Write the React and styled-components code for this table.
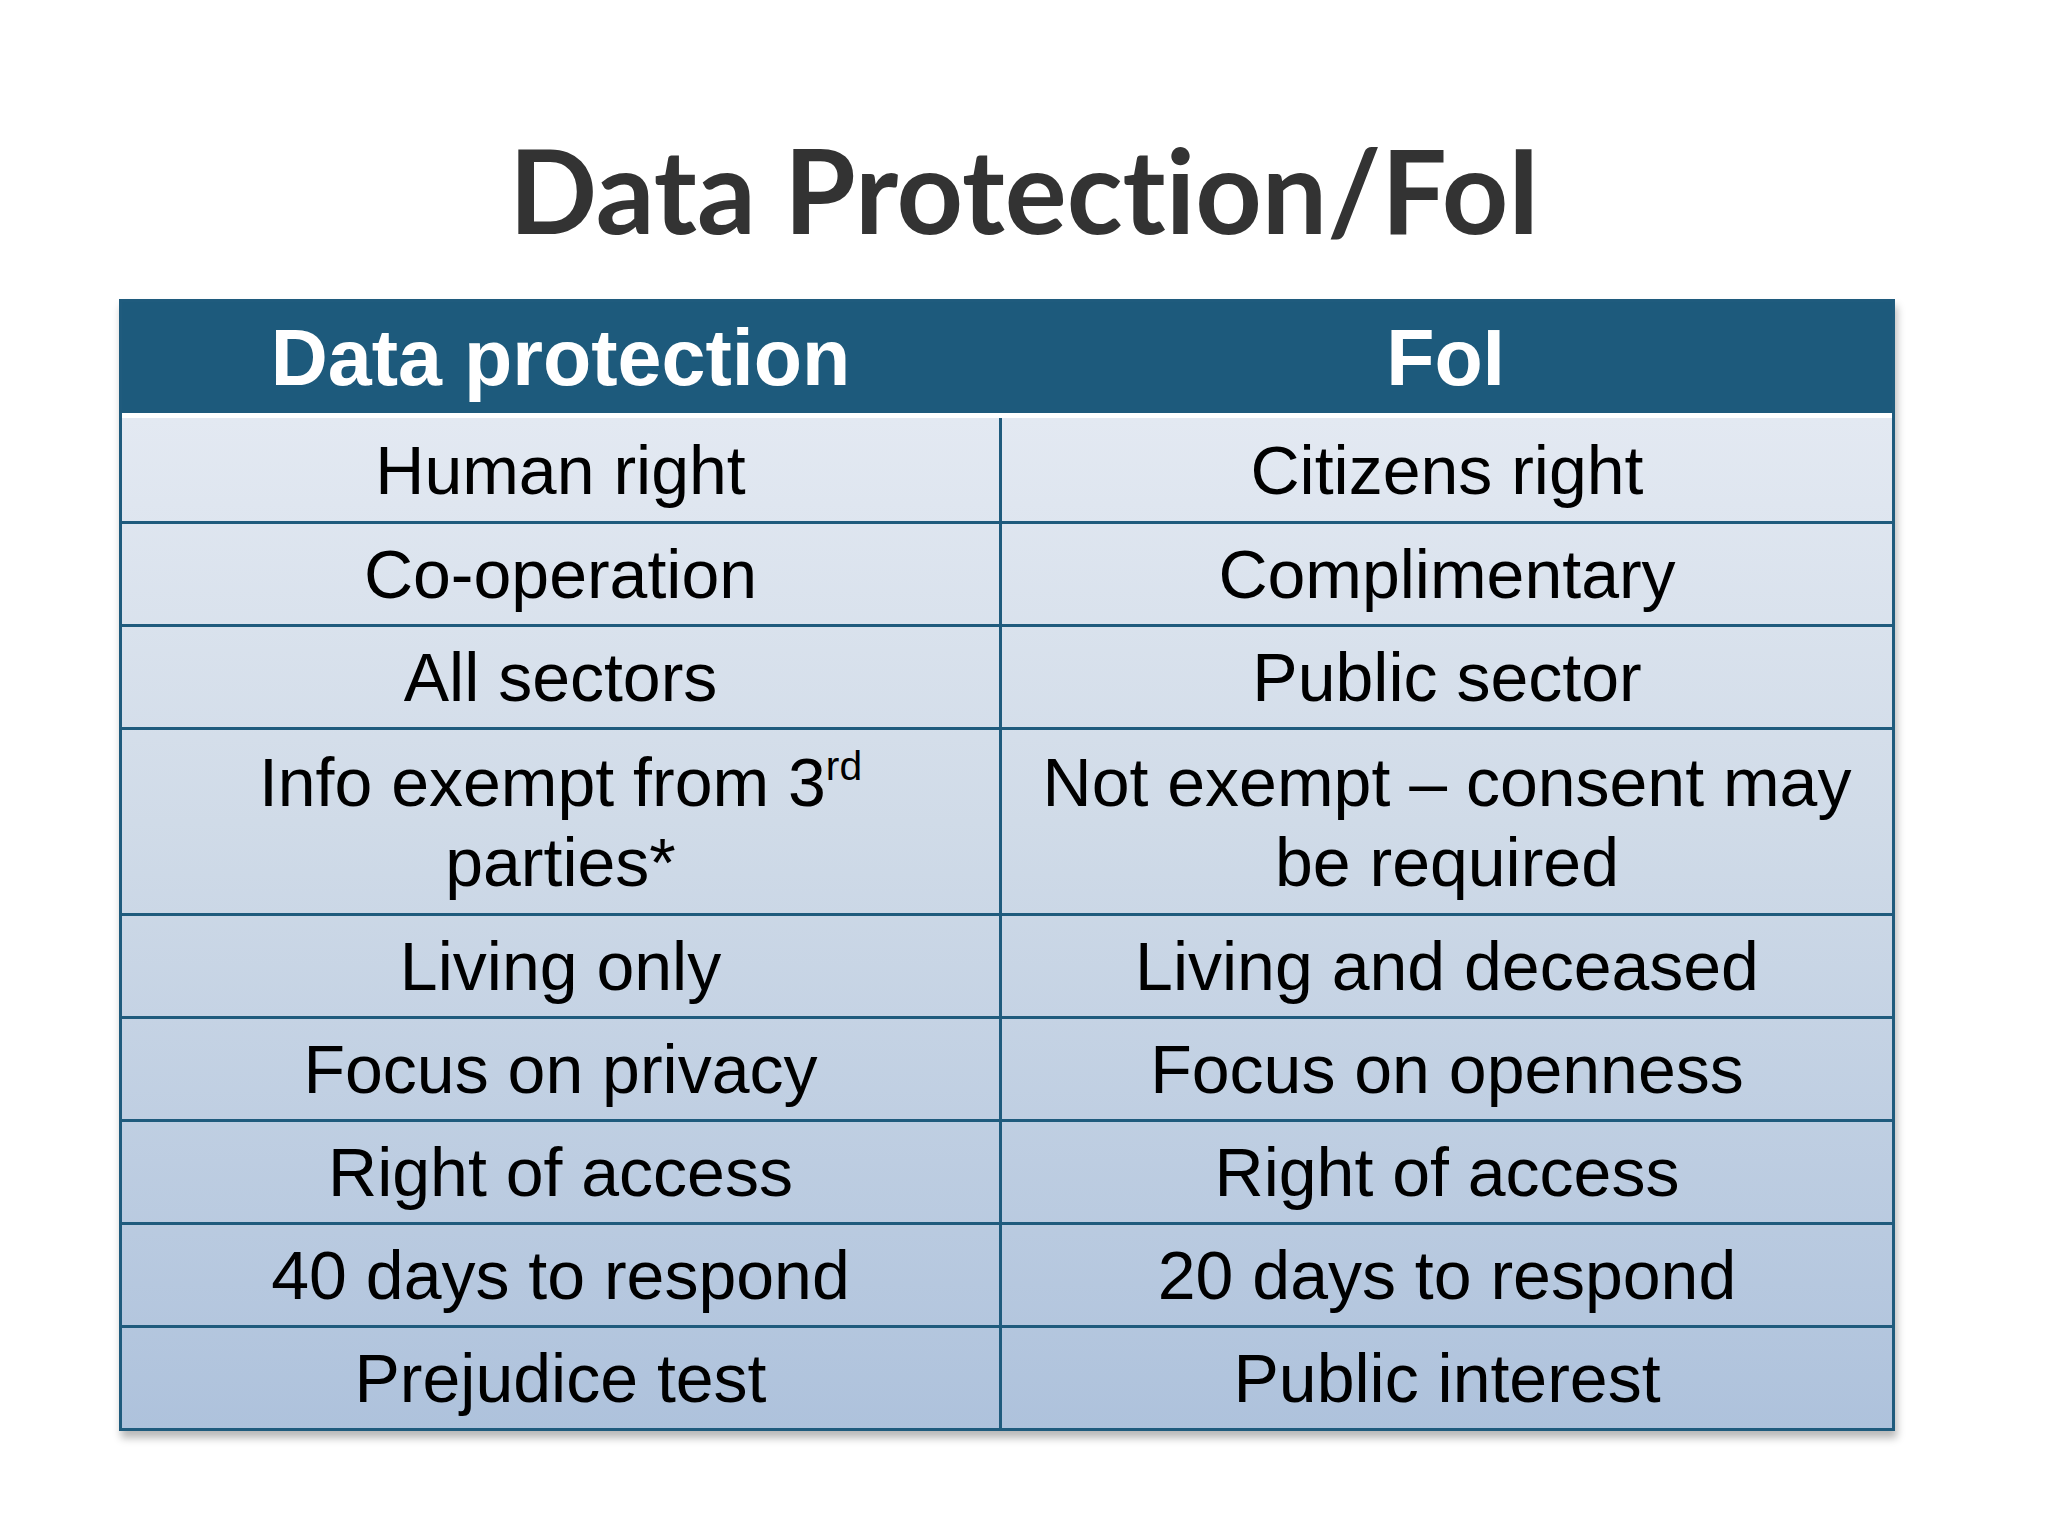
import React from 'react';
import styled, { createGlobalStyle } from 'styled-components';

const COLORS = {
  title: '#333333',
  header: '#1d5a7c',
  line: '#1f5b7d',
  text: '#000000',
};

const GlobalStyle = createGlobalStyle`
  html, body {
    margin: 0;
    padding: 0;
    background: #ffffff;
  }
  body {
    width: 2048px;
    height: 1536px;
    overflow: hidden;
  }
`;

const Slide = styled.div`
  width: 2048px;
  height: 1536px;
  box-sizing: border-box;
  padding-top: 132px;
  display: flex;
  flex-direction: column;
`;

const Title = styled.h1`
  margin: 0 0 0 2px;
  align-self: center;
  font-family: Lato, "Open Sans", sans-serif;
  font-weight: 700;
  font-size: 116px;
  line-height: 1;
  font-variant-ligatures: none;
  color: ${COLORS.title};
  height: 167px;
`;

const Table = styled.div`
  width: 1776px;
  margin-left: 119px;
  box-sizing: border-box;
  border: 3px solid ${COLORS.line};
  box-shadow: 2px 7px 8px rgba(0, 0, 0, 0.28);
  font-family: "Liberation Sans", Arial, sans-serif;
`;

const HeaderRow = styled.div`
  display: grid;
  grid-template-columns: 877px 1fr;
  height: 111px;
  background: ${COLORS.header};
  border-bottom: 5px solid #ffffff;
`;

const HeaderCell = styled.div`
  display: flex;
  align-items: center;
  justify-content: center;
  color: #ffffff;
  font-weight: 700;
  font-size: 79px;
  line-height: 1;
  padding-bottom: 1px;
`;

const Body = styled.div`
  background: linear-gradient(180deg, #e3e9f2 0%, #d0dbe8 40%, #aec2dc 100%);
`;

const Row = styled.div`
  display: grid;
  grid-template-columns: 877px 1fr;
  height: ${p => (p.$tall ? 186 : 103)}px;
  box-sizing: border-box;
  border-top: ${p => (p.$first ? 'none' : `3px solid ${COLORS.line}`)};
`;

const Cell = styled.div`
  display: flex;
  align-items: center;
  justify-content: center;
  color: ${COLORS.text};
  font-size: 68px;
  line-height: 80px;
  padding: 0 30px;
  border-left: ${p => (p.$right ? `3px solid ${COLORS.line}` : 'none')};
`;

const CellText = styled.span`
  display: block;
  text-align: center;
`;

const Sup = styled.span`
  font-size: 0.6em;
  line-height: 0;
  position: relative;
  top: -0.62em;
`;

const rows = [
  ['Human right', 'Citizens right'],
  ['Co-operation', 'Complimentary'],
  ['All sectors', 'Public sector'],
  [
    <>Info exempt from 3<Sup>rd</Sup><br />parties*</>,
    <>Not exempt – consent may<br />be required</>,
    true,
  ],
  ['Living only', 'Living and deceased'],
  ['Focus on privacy', 'Focus on openness'],
  ['Right of access', 'Right of access'],
  ['40 days to respond', '20 days to respond'],
  ['Prejudice test', 'Public interest'],
];

export default function App() {
  return (
    <>
      <GlobalStyle />
      <Slide>
        <Title>Data Protection/FoI</Title>
        <Table>
          <HeaderRow>
            <HeaderCell>Data protection</HeaderCell>
            <HeaderCell>FoI</HeaderCell>
          </HeaderRow>
          <Body>
            {rows.map(([left, right, tall], i) => (
              <Row key={i} $first={i === 0} $tall={tall}>
                <Cell><CellText>{left}</CellText></Cell>
                <Cell $right><CellText>{right}</CellText></Cell>
              </Row>
            ))}
          </Body>
        </Table>
      </Slide>
    </>
  );
}
